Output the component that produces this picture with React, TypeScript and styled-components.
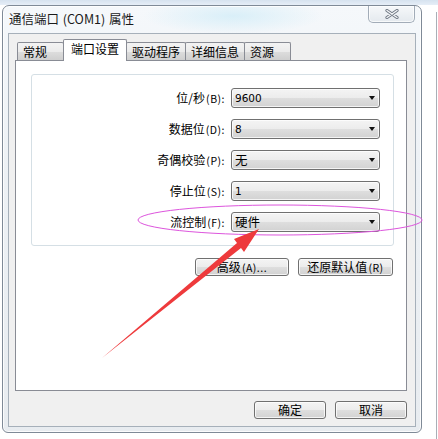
import styled, { createGlobalStyle } from 'styled-components';

const GlobalStyle = createGlobalStyle`
  * { box-sizing: border-box; }
  html, body {
    margin: 0;
    padding: 0;
  }
  body {
    background: #ffffff;
    font-family: "Noto Sans CJK SC", "Liberation Sans", sans-serif;
    font-size: 12px;
    color: #000;
  }
`;

const Screen = styled.div`
  position: relative;
  width: 438px;
  height: 439px;
  overflow: hidden;
  display: flex;
  align-items: flex-start;
  background:
    linear-gradient(to right, transparent 436px, #a9afb7 436px, #a9afb7 437px, transparent 437px) 0 12px / 100% 100% no-repeat,
    linear-gradient(#d6e2ef, #e6eef7 5px, #ffffff 5px);
`;

const Window = styled.div`
  margin: 5px 0 0 2px;
  width: 420px;
  height: 428px;
  display: flex;
  flex-direction: column;
  padding: 0 5px 5px;
  border: 1px solid #7f8a97;
  border-radius: 7px 7px 6px 6px;
  background:
    radial-gradient(ellipse 90px 18px at 230px 10px, rgba(214, 238, 248, 0.9), rgba(214, 238, 248, 0)),
    linear-gradient(180deg, #f5f8fb 0%, #edf1f5 40%, #e8ecf0 100%);
  box-shadow: inset 0 0 0 1px rgba(255, 255, 255, 0.8);
`;

const TitleBar = styled.div`
  height: 27px;
  flex-shrink: 0;
  display: flex;
  justify-content: space-between;
  align-items: flex-start;
`;

const Title = styled.div`
  padding: 5px 0 0 1px;
  font-size: 12.5px;
  line-height: 16px;
  color: #1a1a1a;
  word-spacing: 1px;
`;

const CloseButton = styled.div`
  width: 47px;
  height: 17px;
  margin-right: 1px;
  display: flex;
  align-items: center;
  justify-content: center;
  border: 1px solid #a2acb8;
  border-top: none;
  border-radius: 0 0 5px 5px;
  background: linear-gradient(#f6f8fa, #e4e9ee);
  box-shadow: inset 0 0 0 1px rgba(255, 255, 255, 0.7);
`;

const Client = styled.div`
  flex: 1;
  display: flex;
  flex-direction: column;
  padding: 5px 8px 7px 6px;
  background: #f0f0f0;
  border: 1px solid #a6b0ba;
`;

const TabStrip = styled.div`
  height: 21px;
  flex-shrink: 0;
  margin-left: 2px;
  display: flex;
  align-items: flex-end;
`;

const Tab = styled.div<{ $active?: boolean }>`
  position: relative;
  z-index: ${p => (p.$active ? 2 : 1)};
  height: ${p => (p.$active ? 22 : 18)}px;
  min-width: 47px;
  margin: ${p => (p.$active ? '0 -1px -1px 0' : '0 -1px 0 0')};
  padding: ${p => (p.$active ? '0 7px 3px' : '0 5px')};
  display: flex;
  align-items: center;
  border: 1px solid #898c95;
  border-bottom: none;
  border-radius: 2px 2px 0 0;
  background: ${p => (p.$active ? '#ffffff' : 'linear-gradient(#f3f3f3, #ebebeb 50%, #dddddd 51%, #cfcfcf)')};
  font-size: 12px;
  line-height: 14px;
  white-space: nowrap;
`;

const Panel = styled.div`
  flex: 1;
  display: flex;
  flex-direction: column;
  padding: 13px 12px 0 15px;
  background: #ffffff;
  border: 1px solid #898c95;
`;

const GroupBox = styled.div`
  display: flex;
  flex-direction: column;
  gap: 11px;
  padding: 13px 13px 13px 0;
  border: 1px solid #d5dfe5;
  border-radius: 3px;
  box-shadow: inset 1px 1px 0 #ffffff;
`;

const Row = styled.div`
  height: 20px;
  display: flex;
  justify-content: flex-end;
  align-items: center;
  gap: 6px;
`;

const Label = styled.span`
  font-size: 12px;
  line-height: 14px;
  white-space: nowrap;
`;

const Mnemonic = styled.span`
  font-size: 10.5px;
  letter-spacing: 0.5px;
  margin-left: 1px;
`;

const Combo = styled.div`
  width: 149px;
  height: 20px;
  display: flex;
  align-items: center;
  justify-content: space-between;
  padding: 0 3px 0 3px;
  border: 1px solid #707070;
  border-radius: 3px;
  background: linear-gradient(#f4f4f4 0%, #ececec 50%, #dedede 51%, #d2d2d2 100%);
  box-shadow: inset 0 0 0 1px rgba(255, 255, 255, 0.75);
`;

const ComboValue = styled.span<{ $latin?: boolean }>`
  font-family: ${p => (p.$latin ? '"DejaVu Sans", "Liberation Sans", sans-serif' : '"Noto Sans CJK SC", sans-serif')};
  font-size: ${p => (p.$latin ? '10.5px' : '12.5px')};
  line-height: 14px;
`;

const DropArrow = styled.span`
  width: 0;
  height: 0;
  margin-right: 1px;
  border-left: 3px solid transparent;
  border-right: 3px solid transparent;
  border-top: 4px solid #111;
`;

const ActionRow = styled.div`
  margin-top: 12px;
  padding-right: 1px;
  display: flex;
  justify-content: flex-end;
  gap: 9px;
`;

const Footer = styled.div`
  height: 18px;
  flex-shrink: 0;
  margin-top: 10px;
  display: flex;
  justify-content: flex-end;
  gap: 9px;
`;

const Button = styled.button<{ $w: number }>`
  width: ${p => p.$w}px;
  height: 18px;
  padding: 0;
  border: 1px solid #707070;
  border-radius: 3px;
  background: linear-gradient(#f4f4f4 0%, #ececec 50%, #dedede 51%, #d2d2d2 100%);
  box-shadow: inset 0 0 0 1px rgba(255, 255, 255, 0.75);
  font-family: "Noto Sans CJK SC", sans-serif;
  font-size: 12px;
  line-height: 14px;
  color: #000;
  white-space: nowrap;
`;

const Annotation = styled.svg`
  position: absolute;
  left: 0;
  top: 0;
  width: 438px;
  height: 439px;
  pointer-events: none;
`;

const settings = [
  { label: '位/秒', key: 'B', value: '9600', latin: true },
  { label: '数据位', key: 'D', value: '8', latin: true },
  { label: '奇偶校验', key: 'P', value: '无', latin: false },
  { label: '停止位', key: 'S', value: '1', latin: true },
  { label: '流控制', key: 'F', value: '硬件', latin: false },
];

const tabs = ['常规', '端口设置', '驱动程序', '详细信息', '资源'];

const App = () => {
  return (
    <>
      <GlobalStyle />
      <Screen>
        <Window>
          <TitleBar>
            <Title>通信端口 (COM1) 属性</Title>
            <CloseButton>
              <svg width="14" height="10" viewBox="0 0 14 10">
                <path d="M2 1.5 L12 8.5 M12 1.5 L2 8.5" stroke="#6e7682" strokeWidth="3.2" strokeLinecap="round" />
                <path d="M2 1.5 L12 8.5 M12 1.5 L2 8.5" stroke="#f4f6f8" strokeWidth="1.4" strokeLinecap="round" />
              </svg>
            </CloseButton>
          </TitleBar>
          <Client>
            <TabStrip>
              {tabs.map(t => (
                <Tab key={t} $active={t === '端口设置'}>{t}</Tab>
              ))}
            </TabStrip>
            <Panel>
              <GroupBox>
                {settings.map(s => (
                  <Row key={s.key}>
                    <Label>
                      {s.label}
                      <Mnemonic>({s.key}):</Mnemonic>
                    </Label>
                    <Combo>
                      <ComboValue $latin={s.latin}>{s.value}</ComboValue>
                      <DropArrow />
                    </Combo>
                  </Row>
                ))}
              </GroupBox>
              <ActionRow>
                <Button $w={94}>高级<Mnemonic>(A)...</Mnemonic></Button>
                <Button $w={95}>还原默认值<Mnemonic>(R)</Mnemonic></Button>
              </ActionRow>
            </Panel>
            <Footer>
              <Button $w={72}>确定</Button>
              <Button $w={72}>取消</Button>
            </Footer>
          </Client>
        </Window>
        <Annotation viewBox="0 0 438 439">
          <ellipse cx="280" cy="220" rx="142" ry="15" fill="none" stroke="#dd55dd" strokeWidth="1" />
          <polygon points="102,358 237,243 234,239 259,229 244,252 241,248" fill="#ee3a3c" />
        </Annotation>
      </Screen>
    </>
  );
};

export default App;
